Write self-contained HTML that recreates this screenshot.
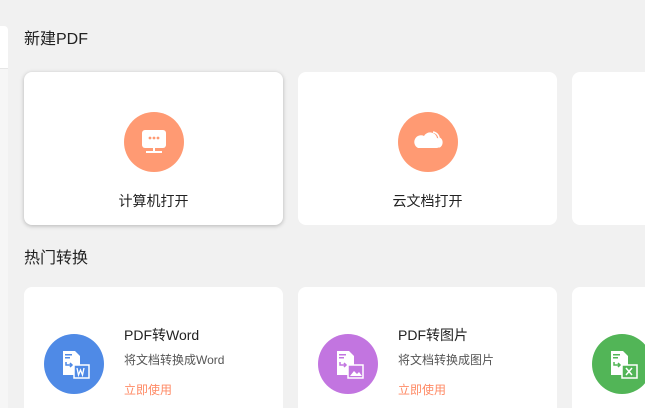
<!DOCTYPE html>
<html><head><meta charset="utf-8"><style>
*{margin:0;padding:0;box-sizing:border-box}
html,body{width:645px;height:408px;overflow:hidden}
body{background:#f1f1f1;font-family:"Liberation Sans","Noto Sans CJK SC",sans-serif;position:relative;color:#222}
.a{position:absolute}
.card{position:absolute;background:#fff;border-radius:8px}
.h{font-size:16px;color:#222}
.circ{position:absolute;width:60px;height:60px;border-radius:50%}
.t{font-size:14px;color:#222}
.s{font-size:12px;color:#555}
.l{font-size:12px;color:#ff8a65}
</style></head><body>
<div class="a" style="left:0;top:26px;width:8px;height:42px;background:#fff;border-radius:0 4px 0 0"></div>
<div class="a" style="left:0;top:68px;width:8px;height:340px;background:#f6f6f6;border-top:1px solid #e6e6e6"></div>
<div class="a h" style="left:24px;top:25px">新建PDF</div>
<div class="card" style="left:24px;top:72px;width:259px;height:153px;box-shadow:0 1px 4px rgba(0,0,0,.25)"></div>
<div class="circ" style="left:124px;top:112px;background:#ff9a73"></div>
<svg class="a" style="left:139px;top:127px" width="30" height="30" viewBox="0 0 30 30"><rect x="3" y="3" width="24" height="18" rx="3" fill="#fff"/><circle cx="11" cy="11" r="1.4" fill="#ff9a73"/><circle cx="15" cy="11" r="1.4" fill="#ff9a73"/><circle cx="19" cy="11" r="1.4" fill="#ff9a73"/><rect x="14" y="21" width="2" height="4" fill="#fff"/><rect x="7" y="24" width="16" height="2" fill="#fff"/></svg>
<div class="a t" style="left:24px;width:259px;text-align:center;top:191px">计算机打开</div>
<div class="card" style="left:298px;top:72px;width:259px;height:153px"></div>
<div class="circ" style="left:398px;top:112px;background:#ff9a73"></div>
<svg class="a" style="left:413px;top:129px" width="30" height="22" viewBox="0 0 30 22"><path d="M5 19h18a5 5 0 0 0 1-10 7 7 0 0 0-13-2 6 6 0 0 0-6 12z" fill="#fff"/><path d="M20 3a7 7 0 0 1 6 6 5 5 0 0 1 0 9" fill="none" stroke="#fff" stroke-width="1.6"/></svg>
<div class="a t" style="left:298px;width:259px;text-align:center;top:191px">云文档打开</div>
<div class="card" style="left:572px;top:72px;width:100px;height:153px"></div>
<div class="a h" style="left:24px;top:244px">热门转换</div>
<div class="card" style="left:24px;top:287px;width:259px;height:140px"></div>
<div class="card" style="left:298px;top:287px;width:259px;height:140px"></div>
<div class="card" style="left:572px;top:287px;width:100px;height:140px"></div>
<div class="circ" style="left:44px;top:334px;background:#4f8ae6"></div>
<div class="circ" style="left:318px;top:334px;background:#c275e0"></div>
<div class="circ" style="left:592px;top:334px;background:#52b557"></div>
<svg class="a" style="left:61px;top:349px" width="32" height="32" viewBox="0 0 32 32"><path d="M2 2h12l5 5v19H2z" fill="#fff"/><rect x="4" y="5" width="7" height="1.5" fill="#4f8ae6"/><rect x="4" y="8" width="5" height="1.5" fill="#4f8ae6"/><path d="M5 13v3h5" fill="none" stroke="#4f8ae6" stroke-width="1.5"/><path d="M9 14l2 2-2 2" fill="none" stroke="#4f8ae6" stroke-width="1.5"/><rect x="13" y="16" width="15" height="13" fill="#4f8ae6" stroke="#fff" stroke-width="1.5"/><path d="M16 19l1.5 7 2-5 2 5 1.5-7" fill="none" stroke="#fff" stroke-width="1.3"/></svg>
<svg class="a" style="left:335px;top:349px" width="32" height="32" viewBox="0 0 32 32"><path d="M2 2h12l5 5v19H2z" fill="#fff"/><rect x="4" y="5" width="7" height="1.5" fill="#c275e0"/><rect x="4" y="8" width="5" height="1.5" fill="#c275e0"/><path d="M5 13v3h5" fill="none" stroke="#c275e0" stroke-width="1.5"/><path d="M9 14l2 2-2 2" fill="none" stroke="#c275e0" stroke-width="1.5"/><rect x="13" y="16" width="15" height="13" fill="#c275e0" stroke="#fff" stroke-width="1.5"/><path d="M15 27l4-5 3 3 2-2 3 4z" fill="#fff"/></svg>
<svg class="a" style="left:609px;top:349px" width="32" height="32" viewBox="0 0 32 32"><path d="M2 2h12l5 5v19H2z" fill="#fff"/><rect x="4" y="5" width="7" height="1.5" fill="#52b557"/><rect x="4" y="8" width="5" height="1.5" fill="#52b557"/><path d="M5 13v3h5" fill="none" stroke="#52b557" stroke-width="1.5"/><path d="M9 14l2 2-2 2" fill="none" stroke="#52b557" stroke-width="1.5"/><rect x="13" y="16" width="15" height="13" fill="#52b557" stroke="#fff" stroke-width="1.5"/><path d="M17 19l6 7M23 19l-6 7" stroke="#fff" stroke-width="1.5"/></svg>
<div class="a t" style="left:124px;top:325px">PDF转Word</div>
<div class="a s" style="left:124px;top:351px">将文档转换成Word</div>
<div class="a l" style="left:124px;top:381px">立即使用</div>
<div class="a t" style="left:398px;top:325px">PDF转图片</div>
<div class="a s" style="left:398px;top:351px">将文档转换成图片</div>
<div class="a l" style="left:398px;top:381px">立即使用</div>
</body></html>
